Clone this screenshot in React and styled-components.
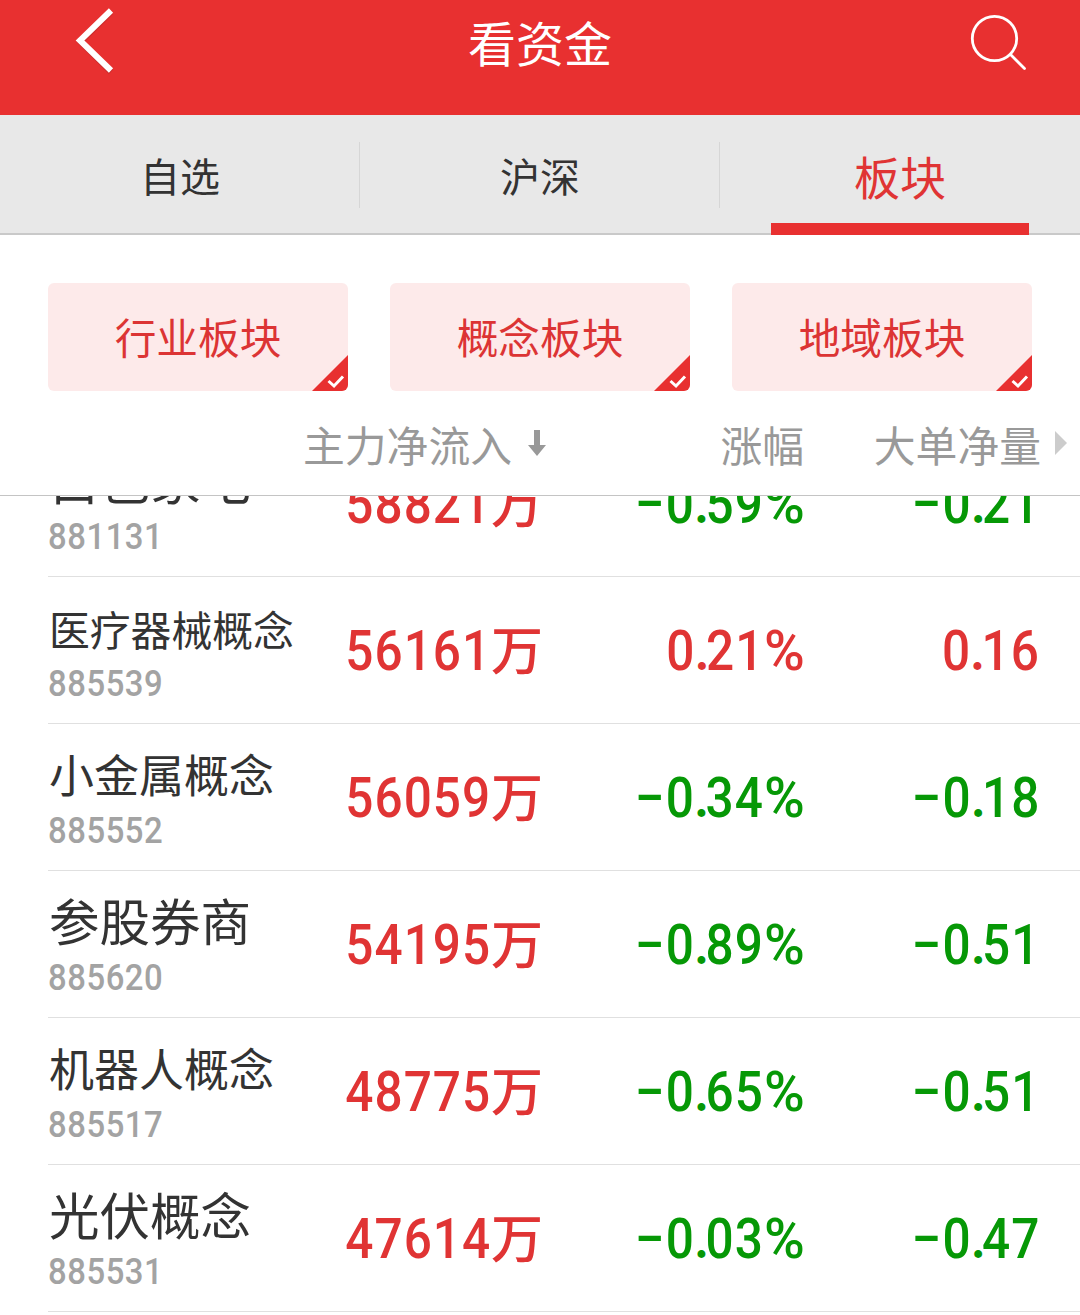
import React from 'react';
import styled, { createGlobalStyle } from 'styled-components';

const tabs = ['自选', '沪深', '板块'];
const filters = ['行业板块', '概念板块', '地域板块'];

const rows = [
  { name: '白色家电', code: '881131', inflow: '58821', change: '–0.59%', net: '–0.21', size: 50.5 },
  { name: '医疗器械概念', code: '885539', inflow: '56161', change: '0.21%', net: '0.16', size: 40.8, up: true },
  { name: '小金属概念', code: '885552', inflow: '56059', change: '–0.34%', net: '–0.18', size: 45 },
  { name: '参股券商', code: '885620', inflow: '54195', change: '–0.89%', net: '–0.51', size: 50.5 },
  { name: '机器人概念', code: '885517', inflow: '48775', change: '–0.65%', net: '–0.51', size: 45 },
  { name: '光伏概念', code: '885531', inflow: '47614', change: '–0.03%', net: '–0.47', size: 50.5 },
];

// signs and the decimal point have their own widths next to the digits
const Amount = ({ text }) => (
  <Digits>
    {text.split(/([–.%])/).filter(Boolean).map((part, i) => {
      if (part === '.') return <Point key={i}>.</Point>;
      if (part === '–') return <Minus key={i}>–</Minus>;
      if (part === '%') return <Percent key={i}>%</Percent>;
      return part;
    })}
  </Digits>
);

const App = () => {
  return (
    <Screen>
      <GlobalStyle />
      <Header>
        <BackIcon viewBox="0 0 48 76">
          <path className="shade" d="M43 12 12.5 42 43 72" />
          <path d="M43 10.5 12 40.5 43 70.5" />
        </BackIcon>
        <Title>看资金</Title>
        <SearchIcon viewBox="0 0 60 60">
          <circle cx="26.5" cy="26.5" r="22.2" />
          <path d="M42.5 42.5 56.5 56.5" />
        </SearchIcon>
      </Header>
      <Tabs>
        {tabs.map((tab) => (
          <Tab key={tab} $active={tab === '板块'}>{tab}</Tab>
        ))}
      </Tabs>
      <Filters>
        {filters.map((filter) => (
          <Filter key={filter}>
            {filter}
            <Corner viewBox="0 0 36 36">
              <path d="M36 0V36H0Z" fill="#e83030" />
              <path d="M16.5 26 22 31 31 21.5" fill="none" stroke="#fff" strokeWidth="3" />
            </Corner>
          </Filter>
        ))}
      </Filters>
      <Columns>
        <Heading>
          主力净流入
          <SortIcon viewBox="0 0 18 26">
            <path d="M6 0H12V15H18L9 26 0 15H6Z" />
          </SortIcon>
        </Heading>
        <Heading>涨幅</Heading>
        <Heading>大单净量</Heading>
        <MoreIcon viewBox="0 0 12 24">
          <path d="M0 0 12 12 0 24Z" />
        </MoreIcon>
      </Columns>
      <List>
        {rows.map((row) => (
          <Row key={row.code}>
            <Stock>
              <Name $size={row.size}>{row.name}</Name>
              <Code>{row.code}</Code>
            </Stock>
            <Value $up>
              <Digits>{row.inflow}</Digits>
              <Unit>万</Unit>
            </Value>
            <Value $up={row.up}><Amount text={row.change} /></Value>
            <Value $up={row.up}><Amount text={row.net} /></Value>
          </Row>
        ))}
      </List>
    </Screen>
  );
};

const GlobalStyle = createGlobalStyle`
  * {
    box-sizing: border-box;
  }

  body {
    margin: 0;
    background: #fff;
  }
`;

const Screen = styled.div`
  display: flex;
  flex-direction: column;
  width: 1080px;
  height: 1315px;
  overflow: hidden;
  background: #fff;
  font-family: 'Noto Sans CJK SC', sans-serif;
`;

const Header = styled.header`
  display: flex;
  justify-content: space-between;
  align-items: flex-start;
  height: 115px;
  padding: 0 52px 0 68px;
  background: #e83030;
`;

const BackIcon = styled.svg`
  width: 48px;
  height: 76px;
  fill: none;
  stroke: #fff;
  stroke-width: 6;

  .shade {
    stroke: #b52a2a;
    opacity: 0.5;
  }
`;

const Title = styled.h1`
  margin: 0;
  padding-right: 4px;
  color: #fff;
  font-size: 48px;
  font-weight: 400;
  line-height: 82px;
`;

const SearchIcon = styled.svg`
  width: 60px;
  height: 60px;
  margin-top: 12px;
  fill: none;
  stroke: #fff;
  stroke-width: 2.8;
  stroke-linecap: round;
`;

const Tabs = styled.nav`
  display: flex;
  height: 120px;
  background: #e8e8e8;
  border-bottom: 2px solid #c9c9c9;
`;

const Tab = styled.div`
  position: relative;
  display: flex;
  flex: 1;
  justify-content: center;
  height: 120px;
  color: ${({ $active }) => ($active ? '#e03434' : '#333')};
  font-size: ${({ $active }) => ($active ? 46 : 40)}px;
  line-height: 120px;

  &:not(:last-child)::after {
    content: '';
    position: absolute;
    right: 0;
    top: 27px;
    width: 1px;
    height: 66px;
    background: #d6d6d6;
  }

  &::before {
    content: '';
    display: ${({ $active }) => ($active ? 'block' : 'none')};
    position: absolute;
    left: 51px;
    bottom: 0;
    width: 258px;
    height: 12px;
    background: #e83030;
  }
`;

const Filters = styled.div`
  display: flex;
  gap: 42px;
  padding: 48px 48px 0;
`;

const Filter = styled.div`
  position: relative;
  width: 300px;
  height: 108px;
  overflow: hidden;
  border-radius: 6px;
  background: #fdeaea;
  color: #dc3434;
  font-size: 41.7px;
  line-height: 107px;
  text-align: center;
`;

const Corner = styled.svg`
  position: absolute;
  right: 0;
  bottom: 0;
  width: 36px;
  height: 36px;
`;

const Columns = styled.div`
  display: grid;
  grid-template-columns: 546px 258px 237px 27px;
  align-items: center;
  height: 105px;
  border-bottom: 1px solid #c4c4c4;
`;

const Heading = styled.div`
  display: flex;
  justify-content: flex-end;
  align-items: center;
  gap: 16px;
  padding-top: 2px;
  color: #999;
  font-size: 41.8px;
  line-height: 60px;
`;

const SortIcon = styled.svg`
  width: 18px;
  height: 26px;
  margin-top: -3px;
  fill: #999;
`;

const MoreIcon = styled.svg`
  width: 12px;
  height: 24px;
  margin: 0 0 0 14px;
  fill: #ccc;
`;

const List = styled.div`
  flex: 1;
  overflow: hidden;

  > :first-child {
    margin-top: -66px;
  }
`;

const Row = styled.div`
  display: grid;
  grid-template-columns: 270px 225px 261px 236px;
  height: 147px;
  margin-left: 48px;
  border-bottom: 1px solid #e0e0e0;
`;

const Stock = styled.div`
  display: flex;
  flex-direction: column;
  white-space: nowrap;
`;

const Name = styled.div`
  height: 84px;
  padding-left: 1px;
  color: #333;
  font-size: ${({ $size }) => $size}px;
  line-height: ${({ $size }) => (132 - $size * 0.7).toFixed(1)}px;
`;

const Code = styled.div`
  color: #a3a3a3;
  font-family: Roboto, sans-serif;
  font-size: 36.5px;
  font-weight: 500;
  line-height: 46px;
  letter-spacing: 0.6px;
  transform: scaleX(0.9);
  transform-origin: left;
`;

const Value = styled.div`
  display: flex;
  justify-content: flex-end;
  color: ${({ $up }) => ($up ? '#e03434' : '#069806')};
  line-height: 148px;
  white-space: nowrap;
`;

const Digits = styled.span`
  font-family: Roboto, sans-serif;
  font-size: 55px;
  font-weight: 500;
  letter-spacing: 1.2px;
  transform: scaleX(0.9);
  transform-origin: right;
`;

const Point = styled.span`
  font-size: 48px;
  font-weight: 900;
  letter-spacing: -3px;
`;

const Minus = styled.span`
  display: inline-block;
  margin-right: 1px;
  transform: scaleX(0.9);
  transform-origin: right;
`;

const Percent = styled.span`
  display: inline-block;
  margin-left: 2.5px;
  transform: scaleX(1.12);
`;

const Unit = styled.span`
  font-size: 52px;
  font-weight: 500;
  line-height: 141px;
`;

export default App;
